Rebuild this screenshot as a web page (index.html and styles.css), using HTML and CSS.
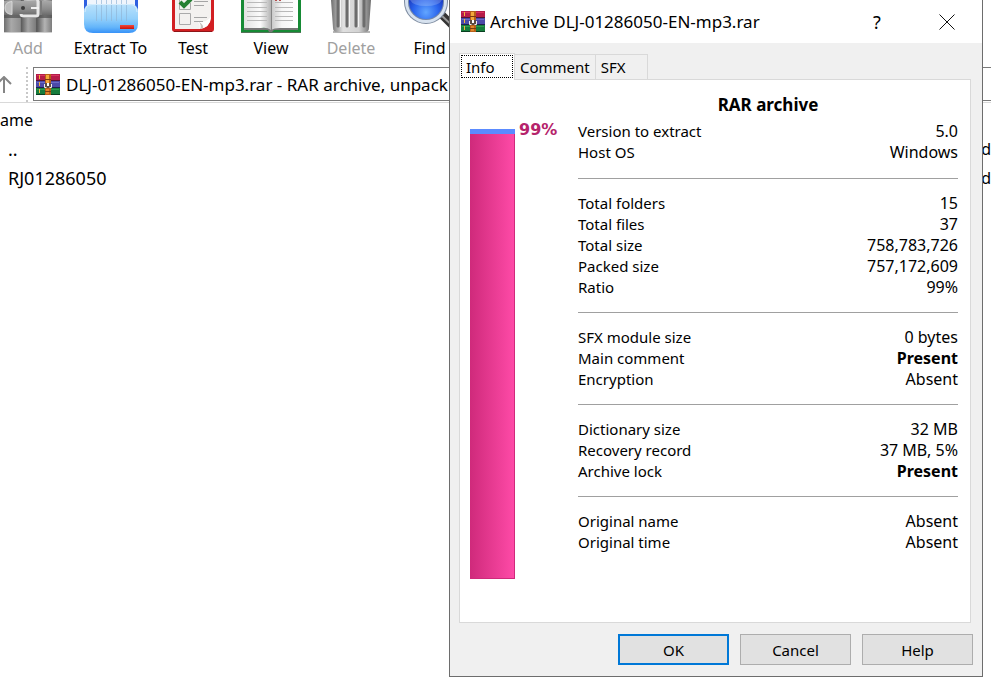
FILE: index.html
```
<!DOCTYPE html>
<html lang="en">
<head>
  <meta charset="UTF-8">
  <meta name="viewport" content="width=device-width, initial-scale=1.0">
  <title>DLJ-01286050-EN-mp3.rar - WinRAR</title>
  <link rel="stylesheet" href="styles.css">
</head>
<body>
  <!-- Shared gradients and the program icon -->
  <svg class="defs" width="0" height="0" aria-hidden="true">
    <defs>
      <linearGradient id="steel" x1="0" x2="1" y1="0" y2="0">
        <stop offset="0" stop-color="#6f6f6f"/>
        <stop offset=".15" stop-color="#a9a9a9"/>
        <stop offset=".34" stop-color="#8f8f8f"/>
        <stop offset=".36" stop-color="#5c5c5c"/>
        <stop offset=".5" stop-color="#a4a4a4"/>
        <stop offset=".66" stop-color="#7d7d7d"/>
        <stop offset=".68" stop-color="#565656"/>
        <stop offset=".85" stop-color="#b4b4b4"/>
        <stop offset="1" stop-color="#7c7c7c"/>
      </linearGradient>
      <linearGradient id="strap" x1="0" x2="0" y1="0" y2="1">
        <stop offset="0" stop-color="#a8a8a8"/>
        <stop offset=".6" stop-color="#8a8a8a"/>
        <stop offset="1" stop-color="#6c6c6c"/>
      </linearGradient>
      <linearGradient id="sky" x1="0" x2="0" y1="0" y2="1">
        <stop offset="0" stop-color="#b9e1fb"/>
        <stop offset=".5" stop-color="#93d0fb"/>
        <stop offset=".8" stop-color="#64b5fa"/>
        <stop offset="1" stop-color="#3792f8"/>
      </linearGradient>
      <linearGradient id="red" x1="0" x2="0" y1="0" y2="1">
        <stop offset="0" stop-color="#f2493b"/>
        <stop offset="1" stop-color="#c9130c"/>
      </linearGradient>
      <linearGradient id="leftPage" x1="0" x2="1" y1="0" y2="0">
        <stop offset="0" stop-color="#e2e2e2"/>
        <stop offset=".6" stop-color="#fbfbfb"/>
        <stop offset="1" stop-color="#b4b4b4"/>
      </linearGradient>
      <linearGradient id="rightPage" x1="0" x2="1" y1="0" y2="0">
        <stop offset="0" stop-color="#c6c6c6"/>
        <stop offset=".4" stop-color="#f6f6f6"/>
        <stop offset="1" stop-color="#ffffff"/>
      </linearGradient>
      <linearGradient id="bin" x1="0" x2="1" y1="0" y2="0">
        <stop offset="0" stop-color="#6f6f6f"/>
        <stop offset=".3" stop-color="#e0e0e0"/>
        <stop offset=".7" stop-color="#d2d2d2"/>
        <stop offset="1" stop-color="#6b6b6b"/>
      </linearGradient>
      <radialGradient id="lens" cx=".5" cy=".8" r=".6">
        <stop offset="0" stop-color="#62a6ff"/>
        <stop offset=".6" stop-color="#2b66ee"/>
        <stop offset="1" stop-color="#1a3cc4"/>
      </radialGradient>
    </defs>
    <symbol id="books" viewBox="0 0 24 21">
      <path fill="#b51c49" d="M0 0h24v7H0z"/>
      <path fill="#4b4aa8" d="M0 7h24v7H0z"/>
      <path fill="#167c3c" d="M0 14h24v7H0z"/>
      <path fill="#d8345f" d="M1 1h22v1H1z"/>
      <path fill="#6b6bc8" d="M1 8h22v1H1z"/>
      <path fill="#2f9c4d" d="M1 15h22v1H1z"/>
      <path fill="#541532" d="M0 6h24v1H0z"/>
      <path fill="#20204f" d="M0 13h24v1H0z"/>
      <path fill="#093f20" d="M0 20h24v1H0z"/>
      <path fill="#f5b63b" d="M3 1h1v4H3zM3 8h1v4H3zM3 15h1v4H3z"/>
      <path fill="#b65f1a" d="M9 0h6v21H9z"/>
      <path fill="#f3a83b" d="M10 1h3v8h-3z"/>
      <path fill="#e0862a" d="M10 15h3v5h-3z"/>
      <path fill="#7b3b12" d="M9 5h6v1H9zM9 17h6v1H9z"/>
      <path fill="#5b4a42" d="M9 9h6v5H9z"/>
      <path fill="none" stroke="#eeeeee" d="M8.500 10v3.500h2M15.500 10v3.500h-2"/>
      <path fill="#ffffff" d="M11 9h2v3h-2z"/>
    </symbol>
  </svg>

  <!-- Main window -->
  <main class="window">
    <div class="toolbar">
      <button class="tool tool-add" type="button" disabled>
        <svg width="48" height="33" viewBox="0 0 48 33" aria-hidden="true">
          <path fill="url(#steel)" d="M0 0h48v33H0z"/>
          <path fill="#4f4f4f" opacity=".7" d="M0 15h48v3H0z"/>
          <path fill="url(#strap)" d="M0 1h48v14H0z"/>
          <path fill="#bdbdbd" stroke="#d8d8d8" d="M8 1.500Q1 2 1 8t7 6.500z"/>
          <path fill="#7c7c7c" d="M36 1h2v14h-2z"/>
          <circle cx="19" cy="8" r="2" fill="#3c3c3c"/>
          <path fill="none" stroke="#e6e6e6" stroke-width="3" d="M20 -1h12q2 0 2 3v12q0 2-2 2H20q-3 0-3-2"/>
          <path stroke="#f1f1f1" stroke-width="2" d="M27 8h8"/>
          <path stroke="#cfcfcf" d="M0 32.500h48"/>
        </svg>
        Add
      </button>
      <button class="tool tool-extract" type="button">
        <svg width="54" height="33" viewBox="0 0 54 33" aria-hidden="true">
          <path fill="#2e5fe0" d="M0 0h54v16H0z"/>
          <path fill="#f0f5fc" d="M3 0h48v12H3z"/>
          <path fill="url(#sky)" d="M8 4h38q8 0 8 8v12q0 9-9 9H9q-9 0-9-9V12q0-8 8-8z"/>
          <path stroke="#8fb4d6" opacity=".65" d="M12.500 0v21M17.500 0v21M22.500 0v21M27.500 0v21M32.500 0v21M37.500 0v21M42.500 0v21"/>
          <path fill="none" stroke="#d5edfd" d="M1 12q0-7 7-7.500h38q7 .5 7 7.500"/>
          <path fill="url(#red)" d="M36 25h14v4H36z"/>
        </svg>
        Extract To
      </button>
      <button class="tool tool-test" type="button">
        <svg width="42" height="33" viewBox="0 0 42 33" aria-hidden="true">
          <path fill="#d21f22" d="M0 0h42v29q0 3-3 3H3q-3 0-3-3z"/>
          <path fill="#8e1518" d="M2 31h38v1H2z"/>
          <path fill="#f3f1ef" d="M3 0h36v18q-1 10-12 11H3z"/>
          <path fill="#ffffff" d="M39 17q-5 6-13 5 3 4 1 7 11-1 12-12z"/>
          <path fill="#c8c2bf" d="M27 22q3 4 1 7l3-1q1-3-4-6z"/>
          <path fill="none" stroke="#aaaaaa" d="M7.500 0v9.500h11V3M7.500 13.500h11v11h-11z"/>
          <path fill="none" stroke="#268033" stroke-width="4" d="M8 2l4 4 7-7"/>
          <path stroke="#a5a5a5" d="M22 1.500h14M22 5.500h10M22 17.500h13M22 21.500h9"/>
        </svg>
        Test
      </button>
      <button class="tool tool-view" type="button">
        <svg width="60" height="33" viewBox="0 0 60 33" aria-hidden="true">
          <path fill="#168a35" d="M0 0h60v33H0z"/>
          <path fill="#55735a" d="M0 32h60v1H0z"/>
          <path fill="#777777" d="M3 28h54v2H33l-2 2h-3l-1-2H3z"/>
          <path fill="url(#leftPage)" d="M3 0h27v30q-4-3-10-2H3z"/>
          <path fill="url(#rightPage)" d="M30 0h27v28H39q-6 0-9 2z"/>
          <path stroke="#858585" d="M30.500 0v30"/>
          <path stroke="#b9b9b9" d="M6 2.500h20M6 7.500h20M6 11.500h20M6 16.500h20M6 20.500h20M34 2.500h18M34 7.500h18M34 11.500h18M34 16.500h18M34 20.500h18"/>
          <path stroke="#b64e4e" stroke-width="2" d="M34 0h2M38 0h2"/>
        </svg>
        View
      </button>
      <button class="tool tool-delete" type="button" disabled>
        <svg width="42" height="33" viewBox="0 0 42 33" aria-hidden="true">
          <path fill="#b5b5b5" d="M3 31h37v2H3z"/>
          <path fill="url(#bin)" d="M1 0h40l-2 28q0 4-4 4H7q-4 0-4-4z"/>
          <path stroke="#6c6c6c" stroke-width="3" stroke-linecap="round" d="M8 0v26M17 0v26M26 0v26M34 0v26"/>
          <path stroke="#f3f3f3" d="M10.500 0v27M19.500 0v27M28.500 0v27"/>
        </svg>
        Delete
      </button>
      <button class="tool tool-find" type="button">
        <svg width="52" height="33" viewBox="0 0 52 33" aria-hidden="true">
          <path stroke="#343434" stroke-width="8" d="M37 14l15 15"/>
          <path stroke="#9a9a9a" stroke-width="2" d="M37 15l15 14"/>
          <circle cx="22" cy="2" r="22" fill="#7f8da1"/>
          <circle cx="22" cy="2" r="21" fill="#d7e2ef"/>
          <circle cx="22" cy="2" r="18" fill="#7286a8"/>
          <circle cx="22" cy="2" r="17" fill="url(#lens)"/>
          <path fill="#ffffff" opacity=".2" d="M6 0h32q-3 6-16 6T6 0z"/>
        </svg>
        Find
      </button>
    </div>

    <div class="address-bar">
      <button class="up" type="button" aria-label="Up one level">
        <svg width="12" height="17" viewBox="0 0 12 17" aria-hidden="true">
          <path fill="none" stroke="#858585" stroke-width="2" d="M4 17V2M-3 8l7-7 7 7"/>
        </svg>
      </button>
      <div class="address">
        <svg width="24" height="21" aria-hidden="true"><use href="#books"/></svg>
        <span>DLJ-01286050-EN-mp3.rar - RAR archive, unpack</span>
      </div>
    </div>

    <table class="files">
      <thead>
        <tr><th class="name">ame</th><th></th></tr>
      </thead>
      <tbody>
        <tr><td>..</td><td class="type">d</td></tr>
        <tr><td>RJ01286050</td><td class="type">d</td></tr>
      </tbody>
    </table>
  </main>

  <!-- Archive information dialog -->
  <section class="dialog" role="dialog" aria-labelledby="dialogTitle">
    <header class="title-bar">
      <svg width="24" height="21" aria-hidden="true"><use href="#books"/></svg>
      <h1 id="dialogTitle">Archive DLJ-01286050-EN-mp3.rar</h1>
      <button class="title-button" type="button">?</button>
      <button class="title-button" type="button" aria-label="Close">
        <svg width="16" height="16" viewBox="0 0 16 16" aria-hidden="true">
          <path stroke="#111111" d="M.5.5l15 15M15.5.5l-15 15"/>
        </svg>
      </button>
    </header>

    <div class="dialog-body">
      <div class="tabs" role="tablist">
        <button class="tab active" type="button" role="tab" aria-selected="true">Info</button>
        <button class="tab" type="button" role="tab">Comment</button>
        <button class="tab sfx" type="button" role="tab">SFX</button>
      </div>

      <div class="panel" role="tabpanel">
        <div class="ratio">
          <div class="bar"></div>
          <strong>99%</strong>
        </div>

        <div class="details">
          <h2>RAR archive</h2>
          <table class="info">
            <tbody>
              <tr><th>Version to extract</th><td>5.0</td></tr>
              <tr><th>Host OS</th><td>Windows</td></tr>
            </tbody>
          </table>
          <table class="info">
            <tbody>
              <tr><th>Total folders</th><td>15</td></tr>
              <tr><th>Total files</th><td>37</td></tr>
              <tr><th>Total size</th><td>758,783,726</td></tr>
              <tr><th>Packed size</th><td>757,172,609</td></tr>
              <tr><th>Ratio</th><td>99%</td></tr>
            </tbody>
          </table>
          <table class="info">
            <tbody>
              <tr><th>SFX module size</th><td>0 bytes</td></tr>
              <tr><th>Main comment</th><td class="present">Present</td></tr>
              <tr><th>Encryption</th><td>Absent</td></tr>
            </tbody>
          </table>
          <table class="info">
            <tbody>
              <tr><th>Dictionary size</th><td>32 MB</td></tr>
              <tr><th>Recovery record</th><td>37 MB, 5%</td></tr>
              <tr><th>Archive lock</th><td class="present">Present</td></tr>
            </tbody>
          </table>
          <table class="info">
            <tbody>
              <tr><th>Original name</th><td>Absent</td></tr>
              <tr><th>Original time</th><td>Absent</td></tr>
            </tbody>
          </table>
        </div>
      </div>

      <div class="actions">
        <button class="action default" type="button">OK</button>
        <button class="action" type="button">Cancel</button>
        <button class="action" type="button">Help</button>
      </div>
    </div>
  </section>
</body>
</html>
```
FILE: styles.css
```
* {
  box-sizing: border-box;
}

body {
  position: relative;
  min-height: 100vh;
  margin: 0;
  overflow: hidden;
  font-family: "Noto Sans", sans-serif;
  font-size: 16px;
  color: #000;
  background-color: #fff;
}

button {
  padding: 0;
  border: none;
  background: none;
  font: inherit;
  color: inherit;
}

svg {
  display: block;
  flex: none;
}

.defs {
  position: absolute;
}

/* Main window */
.toolbar {
  display: flex;
  height: 67px;
}

.tool {
  display: flex;
  flex-direction: column;
  align-items: center;
  flex: none;
  line-height: 30px;
}

.tool:disabled {
  color: #a0a0a0;
}

.tool-add {
  width: 56px;
}

.tool-extract {
  width: 109px;
}

.tool-test {
  width: 56px;
}

.tool-view {
  width: 100px;
}

.tool-delete {
  width: 60px;
}

.tool-find {
  width: 97px;
}

.address-bar {
  display: flex;
  height: 36px;
  border-bottom: 1px solid #d9d9d9;
}

.up {
  width: 28px;
  margin-right: 5px;
  border-right: 2px dotted #c8c8c8;
}

.address {
  display: flex;
  align-items: center;
  flex: 1;
  gap: 6px;
  height: 34px;
  padding-left: 2px;
  border: 1px solid #7a7a7a;
  border-right: none;
  font-size: 17px;
  white-space: nowrap;
  overflow: hidden;
}

.files {
  width: 100%;
  margin-top: 3px;
  border-collapse: collapse;
  font-size: 18px;
  line-height: 29px;
}

.files th,
.files td {
  padding: 0 0 0 8px;
  font-weight: normal;
  text-align: left;
}

.files .name {
  padding: 0;
  font-size: 16px;
}

.files .type {
  width: 9px;
  padding: 0;
  font-size: 16px;
}

/* Dialog */
.dialog {
  position: absolute;
  top: 0;
  right: 8px;
  width: 534px;
  border: 1px solid #6d6d6d;
  border-top: none;
  background-color: #f0f0f0;
}

.title-bar {
  display: flex;
  align-items: center;
  height: 43px;
  padding-left: 11px;
  background-color: #fff;
}

.title-bar h1 {
  flex: 1;
  margin: 0 0 0 5px;
  font-size: 17px;
  font-weight: normal;
}

.title-button {
  display: flex;
  align-items: center;
  justify-content: center;
  width: 70px;
  height: 42px;
  font-size: 18px;
}

.dialog-body {
  padding: 10px 9px 11px;
  font-size: 15px;
}

.tabs {
  display: flex;
  align-items: flex-end;
  height: 26px;
}

.tab {
  height: 25px;
  padding: 0 5px;
  border: 1px solid #d9d9d9;
  border-left: none;
  border-bottom: none;
}

.tab.active {
  position: relative;
  z-index: 1;
  width: 56px;
  height: 27px;
  margin-bottom: -1px;
  padding: 2px;
  border-left: 1px solid #d9d9d9;
  background-color: #fff;
  line-height: 20px;
  text-align: left;
  text-indent: 4px;
  outline: 1px dotted #000;
  outline-offset: -3px;
}

.tab.sfx {
  width: 52px;
  text-align: left;
}

.panel {
  display: flex;
  height: 544px;
  margin-right: 2px;
  padding: 14px 12px 0 10px;
  border: 1px solid #d9d9d9;
  background-color: #fff;
}

.ratio {
  display: flex;
  gap: 4px;
  width: 108px;
  padding-top: 35px;
  color: #b5236b;
}

.ratio strong {
  margin-top: -8px;
  font-family: "DejaVu Sans", sans-serif;
  font-size: 16px;
  line-height: 18px;
}

.bar {
  width: 45px;
  height: 450px;
  border-top: 5px solid #5b8bff;
  background: linear-gradient(to right, #cf2a7b, #ff4ba8);
  box-shadow: inset -1px -1px #cf2a7b;
}

.details {
  flex: 1;
}

.details h2 {
  margin: 0;
  font-size: 17px;
  line-height: 22px;
  text-align: center;
}

.info {
  width: 100%;
  padding: 14px 0;
  border-spacing: 0;
  line-height: 21px;
}

.info + .info {
  border-top: 1px solid #a0a0a0;
}

.details h2 + .info {
  padding: 5px 0 15px;
}

.info th,
.info td {
  padding: 0;
  font-weight: normal;
  text-align: left;
}

.info td {
  font-size: 16px;
  text-align: right;
}

.info .present {
  font-weight: bold;
}

.actions {
  display: flex;
  justify-content: flex-end;
  gap: 11px;
  padding-top: 11px;
}

.action {
  width: 111px;
  height: 31px;
  border: 1px solid #adadad;
  background-color: #e1e1e1;
}

.action.default {
  border: 2px solid #0078d7;
}
```
